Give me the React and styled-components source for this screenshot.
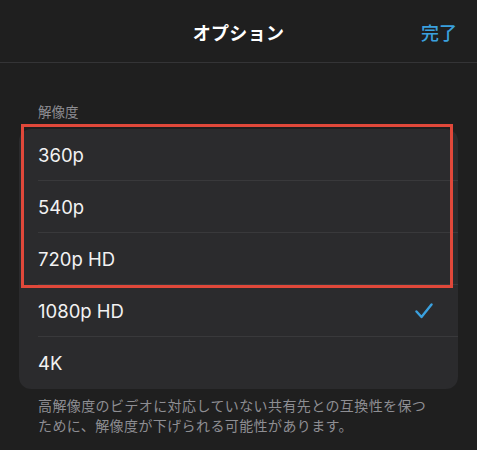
import React from 'react'
import styled, { createGlobalStyle } from 'styled-components'

const GlobalStyle = createGlobalStyle`
  html, body {
    margin: 0;
    padding: 0;
    background: #1f1f1f;
  }
  body {
    font-family: "Inter", "Noto Sans CJK JP", sans-serif;
    -webkit-font-smoothing: antialiased;
  }
`

const Sheet = styled.div`
  width: 477px;
  height: 450px;
  background: #1f1f1f;
  color: #fff;
  overflow: hidden;
`

const Header = styled.div`
  display: grid;
  grid-template-columns: 1fr auto 1fr;
  align-items: center;
  height: 62px;
  border-bottom: 1px solid #343436;
  padding: 0 20px 0 20px;
`

const Title = styled.div`
  grid-column: 2;
  font-size: 18px;
  font-weight: 700;
  letter-spacing: 0.3px;
  padding-top: 2px;
`

const Done = styled.div`
  justify-self: end;
  font-size: 18px;
  font-weight: 500;
  color: #3aa0de;
  padding-top: 2px;
`

const Body = styled.div`
  padding: 40px 19px 0 19px;
`

const SectionLabel = styled.div`
  padding-left: 19px;
  font-size: 13.5px;
  line-height: 18px;
  color: #8e8e93;
  margin-bottom: 8px;
`

const CardWrap = styled.div`
  position: relative;
`

const Card = styled.div`
  background: #2b2b2d;
  border-radius: 12px;
  overflow: hidden;
`

const Row = styled.div`
  padding-left: 19px;
`

const RowInner = styled.div`
  height: 52px;
  display: flex;
  align-items: center;
  justify-content: space-between;
  padding-right: 25px;
  border-bottom: ${p => (p.$last ? 'none' : '1px solid #39393b')};
  box-sizing: border-box;
  font-size: 18.5px;
  font-weight: 400;
  color: #f2f2f2;
`

const Highlight = styled.div`
  position: absolute;
  left: 2px;
  top: -5px;
  width: 432px;
  height: 164px;
  border: 3px solid #e0483a;
  box-sizing: border-box;
  pointer-events: none;
`

const Note = styled.p`
  margin: 7px 0 0 0;
  padding-left: 19px;
  max-width: 395px;
  font-size: 14px;
  line-height: 20px;
  letter-spacing: 0.4px;
  color: #8e8e93;
`

const Check = () => (
  <svg width="18" height="16" viewBox="0 0 18 16" fill="none">
    <path d="M1.5 8.5 L6.5 14 L16.5 1.5" stroke="#3aa0de" strokeWidth="2.4" strokeLinecap="round" strokeLinejoin="round" />
  </svg>
)

const resolutions = [
  { label: '360p' },
  { label: '540p' },
  { label: '720p HD' },
  { label: '1080p HD', selected: true },
  { label: '4K' },
]

export default function App() {
  return (
    <Sheet>
      <GlobalStyle />
      <Header>
        <Title>オプション</Title>
        <Done>完了</Done>
      </Header>
      <Body>
        <SectionLabel>解像度</SectionLabel>
        <CardWrap>
          <Card>
            {resolutions.map((r, i) => (
              <Row key={r.label}>
                <RowInner $last={i === resolutions.length - 1}>
                  <span>{r.label}</span>
                  {r.selected && <Check />}
                </RowInner>
              </Row>
            ))}
          </Card>
          <Highlight />
        </CardWrap>
        <Note>
          高解像度のビデオに対応していない共有先との互換性を保つために、解像度が下げられる可能性があります。
        </Note>
      </Body>
    </Sheet>
  )
}
